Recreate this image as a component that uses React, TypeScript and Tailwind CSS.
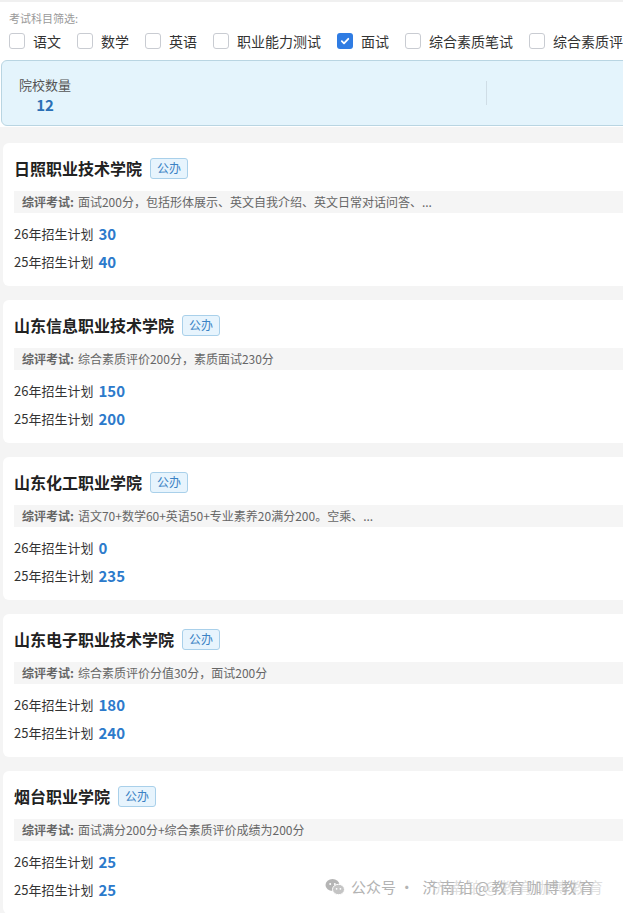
const FONT = '[font-family:"Noto_Sans_CJK_SC","Noto_Sans",sans-serif]'

type School = {
  name: string
  exam: string
  plan26: number
  plan25: number
}

const subjects = [
  { label: '语文', checked: false },
  { label: '数学', checked: false },
  { label: '英语', checked: false },
  { label: '职业能力测试', checked: false },
  { label: '面试', checked: true },
  { label: '综合素质笔试', checked: false },
  { label: '综合素质评价', checked: false },
]

const schools: School[] = [
  {
    name: '日照职业技术学院',
    exam: '面试200分，包括形体展示、英文自我介绍、英文日常对话问答、...',
    plan26: 30,
    plan25: 40,
  },
  {
    name: '山东信息职业技术学院',
    exam: '综合素质评价200分，素质面试230分',
    plan26: 150,
    plan25: 200,
  },
  {
    name: '山东化工职业学院',
    exam: '语文70+数学60+英语50+专业素养20满分200。空乘、...',
    plan26: 0,
    plan25: 235,
  },
  {
    name: '山东电子职业技术学院',
    exam: '综合素质评价分值30分，面试200分',
    plan26: 180,
    plan25: 240,
  },
  {
    name: '烟台职业学院',
    exam: '面试满分200分+综合素质评价成绩为200分',
    plan26: 25,
    plan25: 25,
  },
]

function Checkbox({ checked }: { checked: boolean }) {
  if (checked) {
    return (
      <span className="flex h-4 w-4 shrink-0 items-center justify-center rounded-[3px] bg-[#2f7ce3]">
        <svg width="10" height="10" viewBox="0 0 10 10" fill="none">
          <path d="M1.8 5.2 4 7.3 8.3 2.8" stroke="#fff" strokeWidth="1.8" strokeLinecap="round" strokeLinejoin="round" />
        </svg>
      </span>
    )
  }
  return <span className="h-4 w-4 shrink-0 rounded-[3px] border border-[#c9ccd2] bg-white" />
}

function WechatIcon() {
  return (
    <svg width="20" height="18" viewBox="0 0 20 18">
      <ellipse cx="7.5" cy="7" rx="7" ry="6" fill="#b5b5b5" />
      <circle cx="5.2" cy="6" r="1" fill="#fff" />
      <circle cx="9.8" cy="6" r="1" fill="#fff" />
      <ellipse cx="13.5" cy="11.5" rx="6" ry="5.2" fill="#c4c4c4" stroke="#fff" strokeWidth="1" />
      <circle cx="11.6" cy="10.8" r="0.9" fill="#fff" />
      <circle cx="15.4" cy="10.8" r="0.9" fill="#fff" />
    </svg>
  )
}

function SchoolCard({ school }: { school: School }) {
  return (
    <div className="ml-[3px] h-[143px] rounded-[6px] bg-white pl-[11px] pt-[13px]">
      <div className="flex items-center">
        <h3 className="text-[16px] leading-6 font-bold text-[#222]">{school.name}</h3>
        <span className="ml-2 flex h-[21px] items-center rounded-[3px] border border-[#a9d0ea] bg-[#e7f4fd] px-[6px] text-[12px] text-[#3b82c4]">
          公办
        </span>
      </div>
      <div className="mt-[11px] flex h-[22px] items-center bg-[#f5f5f5] px-2 text-[12px] text-[#666]">
        <span className="font-bold">综评考试:</span>
        <span className="ml-1">{school.exam}</span>
      </div>
      <div className="mt-[7px] flex h-7 items-center text-[13px] text-[#333]">
        26年招生计划
        <span className="ml-[5px] text-[15px] font-bold text-[#2c7acb]">{school.plan26}</span>
      </div>
      <div className="flex h-7 items-center text-[13px] text-[#333]">
        25年招生计划
        <span className="ml-[5px] text-[15px] font-bold text-[#2c7acb]">{school.plan25}</span>
      </div>
    </div>
  )
}

export default function App() {
  return (
    <div className={`relative h-[913px] w-[623px] overflow-hidden bg-[#f4f4f4] ${FONT}`}>
      <div className="w-[760px]">
        {/* subject filter */}
        <div className="border-t-2 border-[#f0f0f0] bg-white px-[9px] pb-[11px] pt-[8px]">
          <div className="text-[11px] leading-4 text-[#9a9a9a]">考试科目筛选:</div>
          <div className="mt-[7px] flex items-center gap-4">
            {subjects.map((s) => (
              <label key={s.label} className="flex items-center gap-2 text-[14px] leading-4 text-[#333]">
                <Checkbox checked={s.checked} />
                <span className="whitespace-nowrap">{s.label}</span>
              </label>
            ))}
          </div>
        </div>

        {/* summary */}
        <div className="bg-white pb-px">
          <div className="ml-px flex h-[66px] items-center rounded-[6px] border border-[#b9d5e2] bg-[#e4f4fc] pl-[17px]">
            <div className="flex flex-col items-center pt-1">
              <span className="text-[13px] leading-5 text-[#555]">院校数量</span>
              <span className="text-[15px] leading-5 font-bold text-[#2a6fb6]">12</span>
            </div>
            <div className="ml-[415px] h-6 w-px bg-[#cfdde6]" />
          </div>
        </div>

        <div className="mt-4 flex flex-col gap-[14px]">
          {schools.map((s) => (
            <SchoolCard key={s.name} school={s} />
          ))}
        </div>
      </div>

      {/* account watermark */}
      <div className="absolute left-[325px] top-[877px] flex items-center text-[15px] leading-5 text-[#b3b3b3]">
        <WechatIcon />
        <span className="ml-[6px] whitespace-nowrap">公众号 · </span>
        <span className="ml-2 whitespace-nowrap tracking-[2.5px] [text-shadow:9px_0_0_rgba(180,180,180,0.45)]">
          济南铂@教育咖博教育
        </span>
      </div>
    </div>
  )
}
